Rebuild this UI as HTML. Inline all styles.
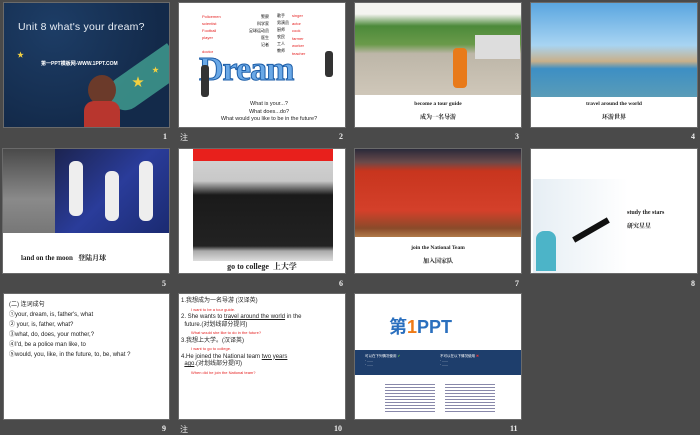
<!DOCTYPE html><html><head><meta charset="utf-8"><style>
*{margin:0;padding:0;box-sizing:border-box}
body{width:700px;height:432px;background:#4a4a4a;position:relative;overflow:hidden;font-family:"Liberation Sans","Noto Sans CJK SC",sans-serif}
.s{position:absolute;background:#fff;overflow:hidden;border:1px solid #6a6a6a}
.n{position:absolute;color:#eee;font:bold 8px "Liberation Serif",serif}
.a{position:absolute;white-space:nowrap}
.c{position:absolute;left:0;right:0;text-align:center;font-family:"Liberation Serif","Noto Serif CJK SC",serif;font-weight:bold;color:#222}
.r{color:#e52020}
</style></head><body>
<!-- row1 -->
<div class="s" style="left:3px;top:2px;width:167px;height:126px;background:radial-gradient(circle at 30% 20%,#1d3d66,#132a4a 70%)">
<div class="a" style="left:14px;top:18px;color:#e8eef5;font:10.5px 'Liberation Sans',sans-serif;letter-spacing:.2px">Unit 8 what's your dream?</div>
<div class="a" style="left:37px;top:57px;color:#fff;font:bold 5px sans-serif">第一PPT模板网-WWW.1PPT.COM</div>
<div class="a" style="left:13px;top:47px;color:#f3d040;font-size:7px">★</div>
<div class="a" style="left:100px;top:60px;width:80px;height:34px;background:#3f9a8e;transform:rotate(-35deg);border-radius:20px 0 0 20px;opacity:.85"></div>
<div class="a" style="left:84px;top:72px;width:28px;height:30px;border-radius:50%;background:#6b3a2a"></div>
<div class="a" style="left:80px;top:98px;width:36px;height:30px;background:#b8362e;border-radius:10px 10px 0 0"></div>
<div class="a" style="left:128px;top:70px;color:#f3d040;font-size:12px">★</div>
<div class="a" style="left:148px;top:62px;color:#f3d040;font-size:7px">★</div>
</div>
<div class="n" style="left:163px;top:132px">1</div>
<div class="s" style="left:178px;top:2px;width:168px;height:126px">
<div class="a r" style="left:23px;top:10px;font-size:4px;line-height:7px">Policemen<br>scientist<br>Football<br>player<br><br>doctor<br>reporter</div>
<div class="a" style="left:70px;top:10px;font-size:4px;line-height:7px;text-align:right">警察<br>科学家<br>足球运动员<br>医生<br>记者</div>
<div class="a" style="left:98px;top:9px;font-size:4px;line-height:7px">歌手<br>男演员<br>厨师<br>农民<br>工人<br>教师</div>
<div class="a r" style="left:113px;top:9px;font-size:4px;line-height:7.5px">singer<br>actor<br>cook<br>farmer<br>worker<br>teacher</div>
<div class="a" style="left:20px;top:48px;font:bold 34px 'Liberation Serif',serif;color:#6aa8e6;letter-spacing:-1px;-webkit-text-stroke:1px #1d5ea8">Dream</div>
<div class="a" style="left:22px;top:62px;width:8px;height:32px;background:#333;border-radius:3px"></div>
<div class="a" style="left:146px;top:48px;width:8px;height:26px;background:#333;border-radius:3px"></div>
<div class="a" style="left:30px;top:98px;font-size:5.5px;line-height:7.5px;text-align:center;width:120px;color:#222">What is your...?<br>What does...do?<br>What would you like to be in the future?</div>
</div>
<div class="n" style="left:339px;top:132px">2</div><div class="n" style="left:180px;top:132px;font-weight:normal">注</div>
<div class="s" style="left:354px;top:2px;width:168px;height:126px">
<div style="height:92px;background:linear-gradient(#f4f4f0 0,#f4f4f0 12%,#4c8a3a 25%,#6a9a4a 45%,#bdb6a8 55%,#cfc7b9 100%)"></div>
<div class="a" style="left:98px;top:45px;width:14px;height:40px;background:#e87a1a;border-radius:4px"></div>
<div class="a" style="left:120px;top:32px;width:45px;height:24px;background:#ddd"></div>
<div class="c" style="top:98px;font-size:5.5px">become a tour guide</div>
<div class="c" style="top:109px;font-size:6px">成为一名导游</div>
</div>
<div class="n" style="left:515px;top:132px">3</div>
<div class="s" style="left:530px;top:2px;width:168px;height:126px">
<div style="height:94px;background:linear-gradient(#5aa6e0,#a8d4f2 45%,#c9b08a 62%,#3d8fc4 70%,#5a9cb8 100%)"></div>
<div class="c" style="top:98px;font-size:5.5px">travel around the world</div>
<div class="c" style="top:109px;font-size:6px">环游世界</div>
</div>
<div class="n" style="left:691px;top:132px">4</div>
<!-- row2 -->
<div class="s" style="left:2px;top:148px;width:168px;height:126px">
<div style="position:absolute;left:0;top:0;width:52px;height:84px;background:linear-gradient(#4a4a4a,#8a8a8a 60%,#777)"></div>
<div style="position:absolute;left:52px;top:0;width:116px;height:84px;background:linear-gradient(135deg,#1c2450,#2a3c9a 50%,#1a2a70)"></div>
<div class="a" style="left:66px;top:12px;width:14px;height:55px;background:#eee;border-radius:6px"></div>
<div class="a" style="left:102px;top:22px;width:14px;height:50px;background:#eee;border-radius:6px"></div>
<div class="a" style="left:136px;top:12px;width:14px;height:60px;background:#eee;border-radius:6px"></div>
<div class="a" style="left:18px;top:104px;font:bold 7px 'Liberation Serif','Noto Serif CJK SC',serif;color:#222">land on the moon&nbsp;&nbsp; 登陆月球</div>
</div>
<div class="n" style="left:162px;top:279px">5</div>
<div class="s" style="left:178px;top:148px;width:168px;height:126px">
<div class="a" style="left:14px;top:0;width:140px;height:12px;background:#e8201c"></div>
<div class="a" style="left:14px;top:12px;width:140px;height:100px;background:linear-gradient(#d0d0d0 0,#c8c8c8 20%,#1a1a1a 34%,#222 85%,#aaa 90%,#ddd 100%)"></div>
<div class="c" style="top:112px;font-size:8px">go to college&nbsp; 上大学</div>
</div>
<div class="n" style="left:339px;top:279px">6</div>
<div class="s" style="left:354px;top:148px;width:168px;height:126px">
<div style="height:88px;background:linear-gradient(#2a2a3a 0,#6a4a4a 15%,#c8351e 25%,#d4402a 70%,#8a4a2a 90%,#b07a4a 100%)"></div>
<div class="c" style="top:96px;font-size:5.5px">join the National Team</div>
<div class="c" style="top:107px;font-size:6px">加入国家队</div>
</div>
<div class="n" style="left:515px;top:279px">7</div>
<div class="s" style="left:530px;top:148px;width:168px;height:126px">
<div class="a" style="left:2px;top:30px;width:95px;height:95px;background:linear-gradient(90deg,#e6eef4,#fff)"></div>
<div class="a" style="left:5px;top:82px;width:20px;height:40px;background:#4cb4c8;border-radius:8px 8px 0 0"></div>
<div class="a" style="left:40px;top:78px;width:40px;height:6px;background:#111;transform:rotate(-30deg)"></div>
<div class="a" style="left:96px;top:57px;font:bold 6px 'Liberation Serif','Noto Serif CJK SC',serif;color:#222;line-height:14px">study the stars<br>研究星星</div>
</div>
<div class="n" style="left:691px;top:279px">8</div>
<!-- row3 -->
<div class="s" style="left:3px;top:293px;width:167px;height:127px">
<div class="a" style="left:5px;top:6px;font-size:6px;line-height:10px;color:#222">(二) 连词成句<br>①your, dream, is, father's, what<br>② your, is, father, what?<br>③what, do, does, your mother,?<br>④I'd, be a police man like, to<br>⑤would, you, like, in the future, to, be, what ?</div>
</div>
<div class="n" style="left:162px;top:424px">9</div>
<div class="s" style="left:178px;top:293px;width:168px;height:127px">
<div class="a" style="left:2px;top:4px;font-size:6px;line-height:7.5px;color:#222">1.我想成为一名导游 (汉译英)<br><span class="r" style="font-size:4px;margin-left:10px">I want to be a tour guide.</span><br>2. She wants to <u>travel around the world</u> in the<br>&nbsp;&nbsp;future.(对划线部分提问)<br><span class="r" style="font-size:4px;margin-left:10px">What would she like to do in the future?</span><br>3.我想上大学。(汉译英)<br><span class="r" style="font-size:4px;margin-left:10px">I want to go to college.</span><br>4.He joined the National team <u>two years</u><br>&nbsp;&nbsp;<u>ago</u>.(对划线部分提问)<br><span class="r" style="font-size:4px;margin-left:10px">When did he join the National team?</span></div>
</div>
<div class="n" style="left:334px;top:424px">10</div><div class="n" style="left:180px;top:424px;font-weight:normal">注</div>
<div class="s" style="left:354px;top:293px;width:168px;height:127px">
<div class="a" style="left:34px;top:19px;font:bold 18px 'Liberation Sans','Noto Sans CJK SC',sans-serif;color:#2a6fbe">第<span style="color:#ee7a16">1</span>PPT</div>
<div class="a" style="left:0;top:56px;width:168px;height:25px;background:#1e3e6c"></div>
<div class="a" style="left:10px;top:60px;font-size:3.5px;color:#fff;line-height:4.5px">可以在下列情况使用 <span style="color:#6c4">✔</span><br>· ......<br>· ......</div>
<div class="a" style="left:85px;top:60px;font-size:3.5px;color:#fff;line-height:4.5px">不可以在以下情况使用 <span style="color:#e33">✖</span><br>· ......<br>· ......</div>
<div class="a" style="left:30px;top:88px;width:50px;height:30px;background:repeating-linear-gradient(#fff 0,#fff 2px,#88a 2px,#88a 3px)"></div>
<div class="a" style="left:90px;top:88px;width:50px;height:30px;background:repeating-linear-gradient(#fff 0,#fff 2px,#88a 2px,#88a 3px)"></div>
</div>
<div class="n" style="left:510px;top:424px">11</div>
</body></html>
